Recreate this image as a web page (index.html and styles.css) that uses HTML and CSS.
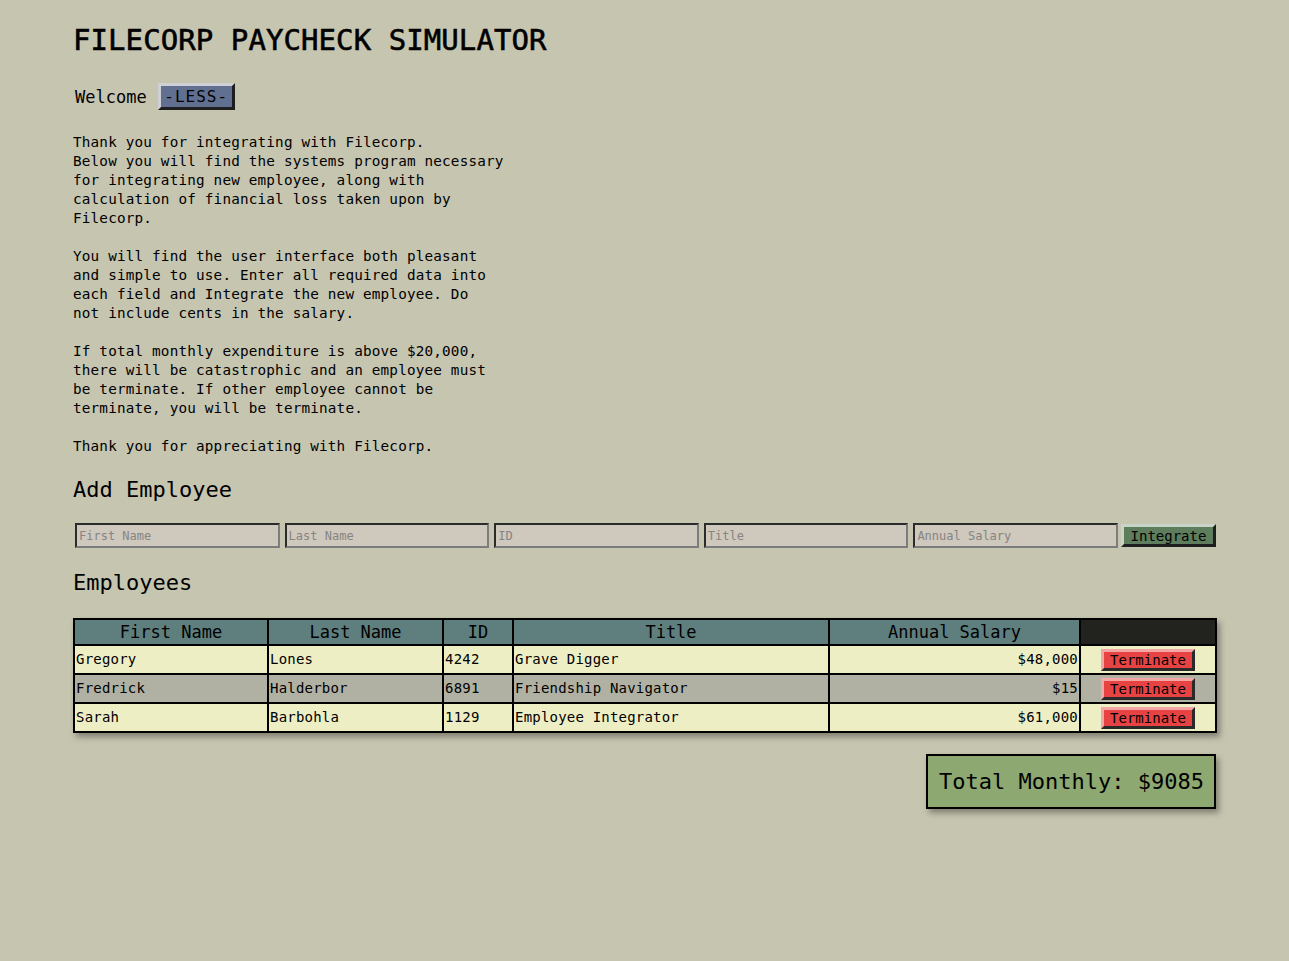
FILE: index.html
```html
<!DOCTYPE html>
<html lang="en">
<head>
<meta charset="utf-8">
<title>Filecorp Paycheck Simulator</title>
<link rel="stylesheet" href="styles.css">
</head>
<body>
<div class="page">
  <h1 class="title">FILECORP PAYCHECK SIMULATOR</h1>
  <div class="welcome">
    <span class="welcome-text">Welcome</span>
    <button class="less-btn">-LESS-</button>
  </div>
  <div class="intro">
    <p>Thank you for integrating with Filecorp.<br>Below you will find the systems program necessary<br>for integrating new employee, along with<br>calculation of financial loss taken upon by<br>Filecorp.</p>
    <p>You will find the user interface both pleasant<br>and simple to use. Enter all required data into<br>each field and Integrate the new employee. Do<br>not include cents in the salary.</p>
    <p>If total monthly expenditure is above $20,000,<br>there will be catastrophic and an employee must<br>be terminate. If other employee cannot be<br>terminate, you will be terminate.</p>
    <p>Thank you for appreciating with Filecorp.</p>
  </div>
  <h2 class="section add-title">Add Employee</h2>
  <form class="add-form">
    <input class="field" type="text" placeholder="First Name">
    <input class="field" type="text" placeholder="Last Name">
    <input class="field" type="text" placeholder="ID">
    <input class="field" type="text" placeholder="Title">
    <input class="field" type="text" placeholder="Annual Salary">
    <button class="integrate-btn" type="button">Integrate</button>
  </form>
  <h2 class="section emp-title">Employees</h2>
  <table class="emp-table">
    <colgroup>
      <col class="c1"><col class="c2"><col class="c3"><col class="c4"><col class="c5"><col class="c6">
    </colgroup>
    <thead>
      <tr>
        <th>First Name</th><th>Last Name</th><th>ID</th><th>Title</th><th>Annual Salary</th><th class="th-dark"></th>
      </tr>
    </thead>
    <tbody>
      <tr class="odd">
        <td>Gregory</td><td>Lones</td><td>4242</td><td>Grave Digger</td><td class="num">$48,000</td><td class="act"><button class="term-btn">Terminate</button></td>
      </tr>
      <tr class="even">
        <td>Fredrick</td><td>Halderbor</td><td>6891</td><td>Friendship Navigator</td><td class="num">$15</td><td class="act"><button class="term-btn">Terminate</button></td>
      </tr>
      <tr class="odd">
        <td>Sarah</td><td>Barbohla</td><td>1129</td><td>Employee Integrator</td><td class="num">$61,000</td><td class="act"><button class="term-btn">Terminate</button></td>
      </tr>
    </tbody>
  </table>
  <div class="total-row">
    <div class="total-box">Total Monthly: $9085</div>
  </div>
</div>
</body>
</html>
```

FILE: styles.css
```css
html, body {
  margin: 0;
  padding: 0;
  background: #c6c5b0;
}
body {
  font-family: "DejaVu Sans Mono", "Liberation Mono", monospace;
  color: #000;
  min-height: 961px;
}
.page {
  width: 1143px;
  margin-left: 73px;
  padding-top: 23px;
}
.title {
  margin: 0;
  font-size: 29px;
  line-height: 34px;
  font-weight: normal;
  letter-spacing: 0.08px;
  -webkit-text-stroke: 0.6px #000;
}
.welcome {
  margin-top: 26px;
  display: flex;
  align-items: center;
  height: 27px;
  padding-left: 2px;
}
.welcome-text {
  font-size: 17px;
  margin-right: 11px;
}
.less-btn {
  font-family: inherit;
  font-size: 16px;
  letter-spacing: 1px;
  width: 77px;
  height: 27px;
  padding: 0;
  background: #617090;
  color: #000;
  border: 3px solid;
  border-color: #cfd0d6 #1e1e1e #1e1e1e #cfd0d6;
}
.intro {
  margin-top: 23px;
  font-size: 14.3px;
  letter-spacing: 0.18px;
  line-height: 19px;
}
.intro p {
  margin: 0 0 19px;
}
.intro p:last-child {
  margin-bottom: 0;
}
.section {
  margin: 0;
  font-size: 22px;
  line-height: 26px;
  font-weight: normal;
}
.add-title {
  margin-top: 21px;
}
.add-form {
  margin: 20px 0 0;
  display: flex;
  gap: 5px;
  padding-left: 2px;
  height: 25px;
}
.field {
  flex: 1;
  min-width: 0;
  box-sizing: border-box;
  height: 25px;
  margin: 0;
  padding: 0 2px;
  font-family: inherit;
  font-size: 12px;
  background: #cfc8bc;
  border: 2px solid;
  border-color: #2b2b2b #7c7c7c #7c7c7c #2b2b2b;
  outline: none;
}
.field:last-of-type {
  margin-right: -2px;
}
.field::placeholder {
  color: #858585;
}
.integrate-btn {
  flex: 0 0 95px;
  box-sizing: border-box;
  height: 23px;
  margin-top: 1px;
  padding: 0;
  font-family: inherit;
  font-size: 14px;
  background: #5d7d5d;
  color: #000;
  border: 3px solid;
  border-color: #c9d4c9 #1e1e1e #1e1e1e #c9d4c9;
}
.emp-title {
  margin-top: 22px;
}
.emp-table {
  margin-top: 22px;
  width: 1142px;
  table-layout: fixed;
  border-collapse: collapse;
  border: 2px solid #000;
  box-shadow: 3px 4px 6px rgba(0, 0, 0, 0.35);
}
.c1 { width: 194px; }
.c2 { width: 175px; }
.c3 { width: 70px; }
.c4 { width: 316px; }
.c5 { width: 251px; }
.c6 { width: 136px; }
.emp-table th,
.emp-table td {
  border: 2px solid #000;
  padding: 0 1px;
  white-space: nowrap;
}
.emp-table th {
  height: 24px;
  background: #5f7e7e;
  font-weight: normal;
  font-size: 17px;
  text-align: center;
  line-height: 24px;
}
.emp-table th.th-dark {
  background: #22231e;
}
.emp-table td {
  height: 27px;
  font-size: 14px;
  letter-spacing: 0.2px;
  line-height: 27px;
  text-align: left;
}
.emp-table tr.odd td {
  background: #eeeec5;
}
.emp-table tr.even td {
  background: #b1b1a3;
}
.emp-table td.num {
  text-align: right;
}
.emp-table td.act {
  text-align: center;
}
.term-btn {
  box-sizing: border-box;
  width: 94px;
  height: 22px;
  padding: 0;
  vertical-align: middle;
  font-family: inherit;
  font-size: 14px;
  letter-spacing: 0;
  background: #e84343;
  color: #000;
  border: 3px solid;
  border-color: #f2a6a6 #2a2a2a #2a2a2a #f2a6a6;
}
.total-row {
  display: flex;
  justify-content: flex-end;
  margin-top: 21px;
}
.total-box {
  box-sizing: border-box;
  width: 290px;
  height: 55px;
  padding-left: 11px;
  display: flex;
  align-items: center;
  font-size: 22px;
  background: #8ea871;
  border: 2px solid #000;
  box-shadow: 3px 4px 6px rgba(0, 0, 0, 0.35);
}
```
